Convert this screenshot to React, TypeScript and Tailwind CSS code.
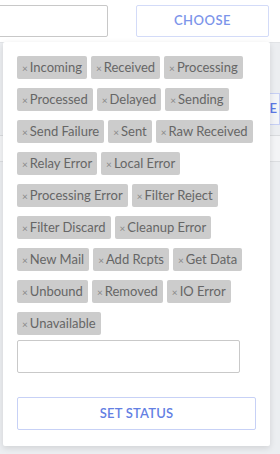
import React from "react";

const tags = [
  "Incoming", "Received", "Processing", "Processed", "Delayed", "Sending",
  "Send Failure", "Sent", "Raw Received", "Relay Error", "Local Error",
  "Processing Error", "Filter Reject", "Filter Discard", "Cleanup Error",
  "New Mail", "Add Rcpts", "Get Data", "Unbound", "Removed", "IO Error", "Unavailable",
];

export default function App() {
  return (
    <div
      className="relative w-[280px] h-[454px] overflow-hidden bg-white"
      style={{ fontFamily: "'Source Sans Pro', Lato, 'Noto Sans', sans-serif" }}
    >
      <div className="flex h-[42px] pt-[5px]">
        <div className="ml-[-20px] w-[128px] h-[32px] border border-[#c8c8c8] rounded-[2px] bg-white" />
        <div className="ml-[28px] w-[133px] h-[32px] border border-[#d3dbf8] rounded-[2px] flex items-center justify-center text-[13px] font-semibold tracking-[0.5px] text-[#7d95ea]">
          CHOOSE
        </div>
      </div>
      <div className="h-[412px] bg-[#eceef1] border-t border-[#e2e4e7]">
        <div className="h-[50px]" />
        <div className="flex justify-end">
          <div className="w-[120px] h-[32px] border border-[#c7d0f5] bg-[#f4f5f8] flex items-center justify-end pr-[2px] text-[13px] font-semibold text-[#5b78e6]">
            CE
          </div>
        </div>
        <div className="h-[10px]" />
        <div className="h-[26px] border-t border-[#d9dbde] bg-[#f3f4f6]" />
        <div className="border-t border-[#dcdee1]" />
      </div>

      <div className="absolute left-[3px] top-[42px] w-[267px] h-[404px] bg-white rounded-[2px] shadow-[0_2px_6px_rgba(0,0,0,0.12)] px-[14px] pt-[14px]">
        <div className="flex flex-wrap gap-x-[4px] gap-y-[9px]">
          {tags.map((t) => (
            <span
              key={t}
              className="h-[23px] flex items-center px-[5px] bg-[#cccccc] rounded-[2px] text-[13px] text-[#666666] leading-none"
            >
              <span className="text-[10px] text-[#888888] mr-[2px]">×</span>
              {t}
            </span>
          ))}
        </div>
        <div className="mt-[5px] w-[223px] h-[33px] border border-[#c9c9c9] rounded-[2px]" />
        <div className="mt-[24px] w-[239px] h-[33px] border border-[#c7d1f6] rounded-[2px] flex items-center justify-center text-[13px] font-semibold tracking-[0.2px] text-[#6480e3]">
          SET STATUS
        </div>
      </div>
    </div>
  );
}
